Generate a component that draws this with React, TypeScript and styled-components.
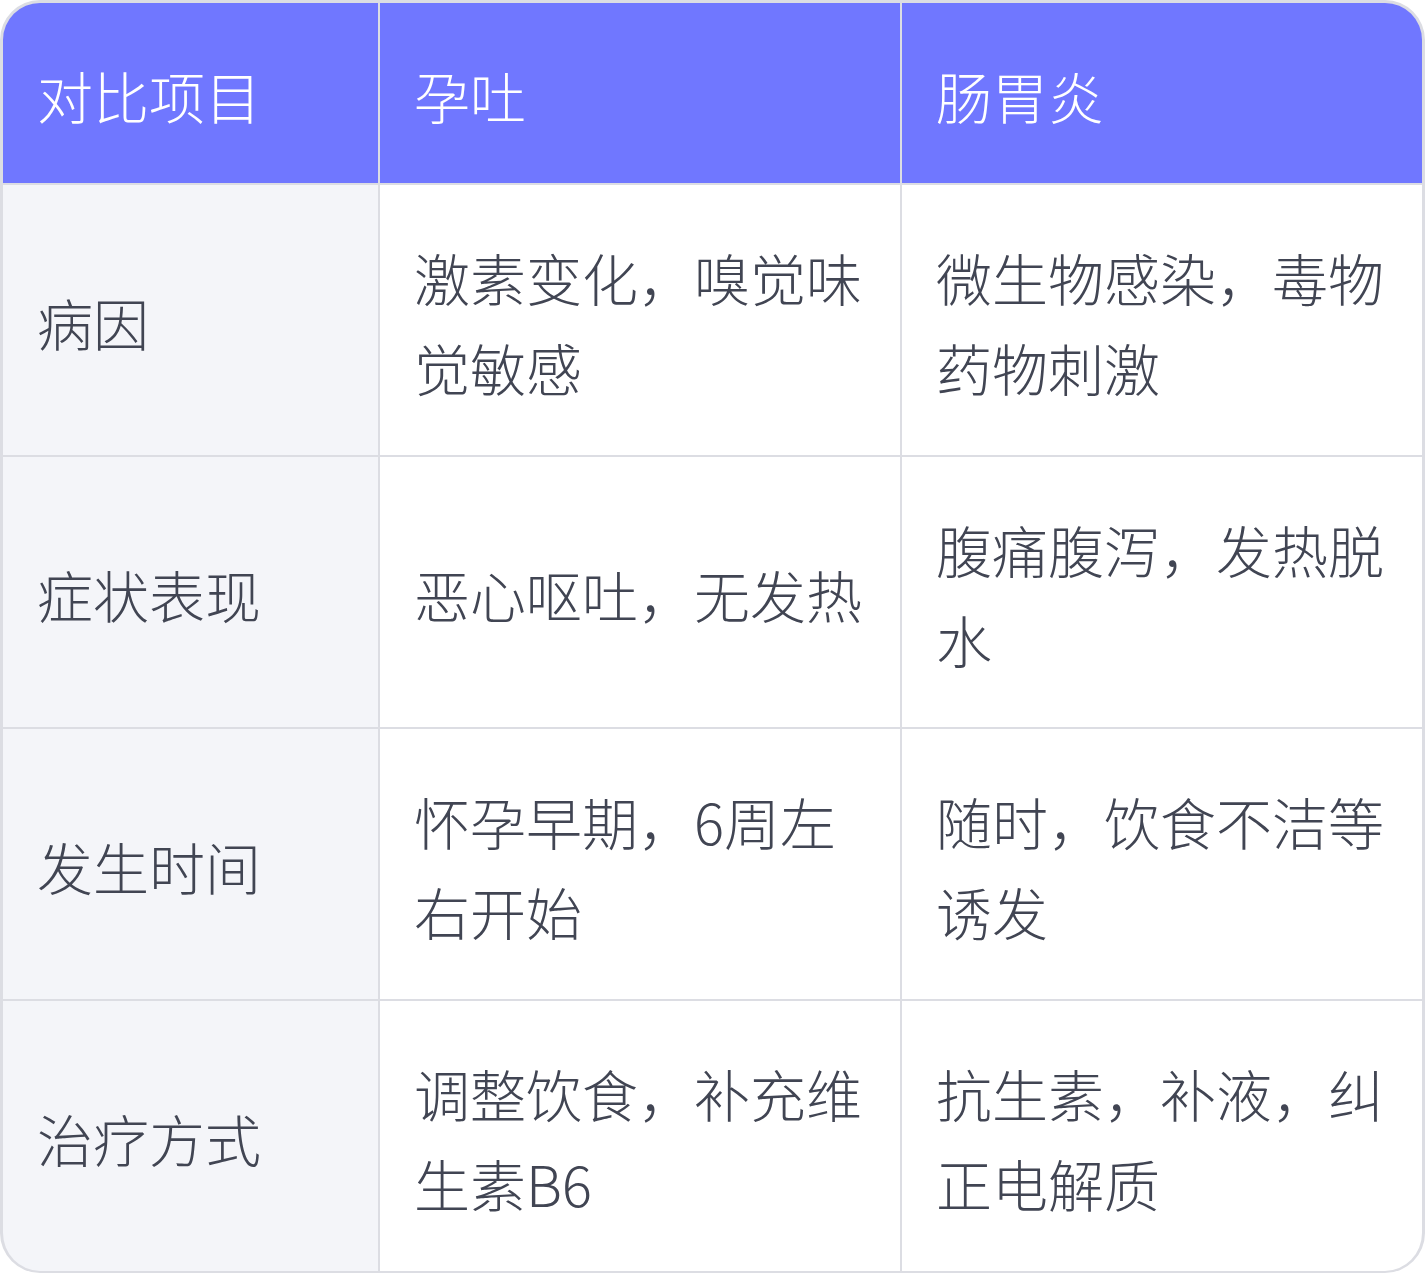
import React from "react";
import styled, { createGlobalStyle } from "styled-components";

const rows = [
  { item: "病因", a: "激素变化，嗅觉味觉敏感", b: "微生物感染，毒物药物刺激" },
  { item: "症状表现", a: "恶心呕吐，无发热", b: "腹痛腹泻，发热脱水" },
  { item: "发生时间", a: "怀孕早期，6周左右开始", b: "随时，饮食不洁等诱发" },
  { item: "治疗方式", a: "调整饮食，补充维生素B6", b: "抗生素，补液，纠正电解质" },
];

const App = () => {
  return (
    <Page>
      <GlobalStyle />
      <Table>
        <HeadCell>对比项目</HeadCell>
        <HeadCell>孕吐</HeadCell>
        <HeadCell>肠胃炎</HeadCell>
        {rows.map((r) => (
          <React.Fragment key={r.item}>
            <Cell $first>{r.item}</Cell>
            <Cell>{r.a}</Cell>
            <Cell>{r.b}</Cell>
          </React.Fragment>
        ))}
      </Table>
    </Page>
  );
};

export default App;

const GlobalStyle = createGlobalStyle`
  body {
    margin: 0;
    background: #ffffff;
    font-family: "Noto Sans CJK SC Light", "Noto Sans CJK SC", "Noto Sans", sans-serif;
  }
`;

const Page = styled.div`
  width: 1425px;
  height: 1273px;
`;

const Table = styled.div`
  display: grid;
  grid-template-columns: 375px 520px 520px;
  grid-template-rows: 180px repeat(4, 270px);
  gap: 2px;
  background-color: #dcdde3;
  border: 3px solid #dcdde3;
  border-bottom-width: 2px;
  border-radius: 40px;
  overflow: hidden;
`;

const HeadCell = styled.div`
  display: flex;
  align-items: center;
  padding: 3px 34px 0 34px;
  background-color: #7077ff;
  color: #ffffff;
  font-size: 56px;
  font-weight: 300;
  line-height: 90px;
`;

const Cell = styled.div<{ $first?: boolean }>`
  display: flex;
  align-items: center;
  padding: 3px 34px 0 34px;
  background-color: ${(p) => (p.$first ? "#f4f5f9" : "#ffffff")};
  color: #414553;
  font-size: 56px;
  font-weight: 300;
  line-height: 90px;
`;
